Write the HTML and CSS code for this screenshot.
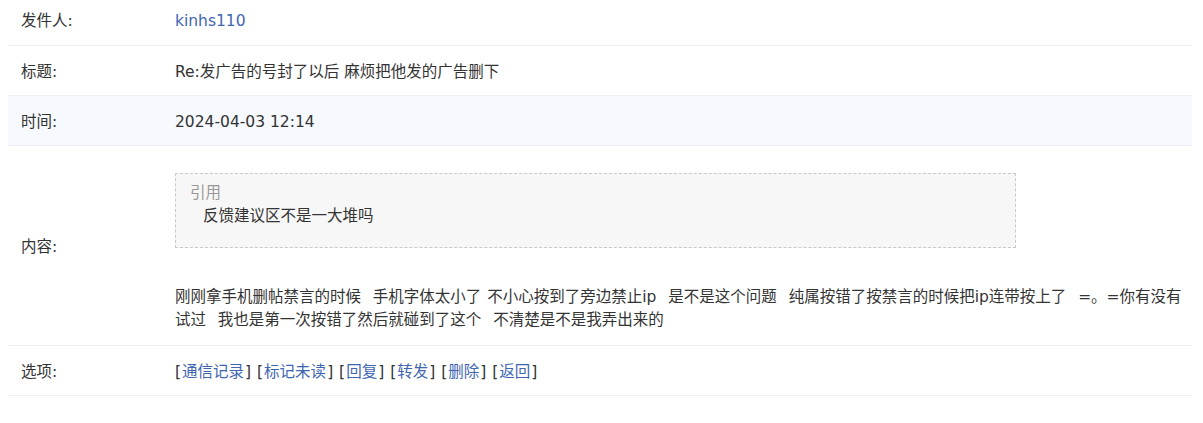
FILE: index.html
```html
<!DOCTYPE html>
<html lang="zh-CN">
<head>
    <meta charset="utf-8"/>
    <title>短消息</title>
    <link rel="stylesheet" href="styles.css">
</head>
<body>
<table class="msg">
    <tr class="first">
        <td class="label">发件人:</td>
        <td class="val"><a href="#">kinhs110</a></td>
    </tr>
    <tr>
        <td class="label">标题:</td>
        <td class="val">Re:发广告的号封了以后 麻烦把他发的广告删下</td>
    </tr>
    <tr class="alt">
        <td class="label">时间:</td>
        <td class="val">2024-04-03 12:14</td>
    </tr>
    <tr>
        <td class="label mid">内容:</td>
        <td class="val content">
            <div class="quote">
                <div class="qtitle">引用</div>
                <div class="qtext">反馈建议区不是一大堆吗</div>
            </div>
            <p class="body">刚刚拿手机删帖禁言的时候&nbsp; 手机字体太小了 不小心按到了旁边禁止ip&nbsp; 是不是这个问题&nbsp; 纯属按错了按禁言的时候把ip连带按上了&nbsp; =。=你有没有试过&nbsp; 我也是第一次按错了然后就碰到了这个&nbsp; 不清楚是不是我弄出来的</p>
        </td>
    </tr>
    <tr>
        <td class="label">选项:</td>
        <td class="val ops">[<a href="#">通信记录</a>] [<a href="#">标记未读</a>] [<a href="#">回复</a>] [<a href="#">转发</a>] [<a href="#">删除</a>] [<a href="#">返回</a>]</td>
    </tr>
</table>
</body>
</html>
```

FILE: styles.css
```css
* {
    padding: 0;
    margin: 0;
}

body {
    margin: 0 11px 0 8px;
    font-family: "DejaVu Sans", "Noto Sans CJK SC", sans-serif;
    font-size: 15.5px;
    color: #333;
    background: #fff;
}

a {
    color: #4066b2;
    text-decoration: none;
}

.msg {
    width: 100%;
    border-collapse: collapse;
}

.msg td {
    line-height: 20px;
    padding: 16px 8px 13px 0;
    border-bottom: 1px solid #ebeef2;
    vertical-align: top;
}

.msg .first td {
    padding-top: 11px;
    padding-bottom: 14px;
}

.msg .alt td {
    background-color: #f6f9fd;
}

.msg td.label {
    width: 154px;
    padding-left: 13px;
    padding-right: 0;
}

.msg td.mid {
    vertical-align: middle;
}

.msg td.content {
    padding-top: 27px;
    padding-bottom: 13px;
}

.quote {
    width: 811px;
    padding: 8px 14px 19px;
    line-height: 23px;
    background-color: #f7f7f7;
    border: 1px dashed #c9c9c9;
}

.qtitle {
    color: #999;
}

.qtext {
    padding-left: 13px;
}

.body {
    margin-top: 38px;
    line-height: 23px;
    word-spacing: 1px;
}

.ops {
    word-spacing: 1px;
}

.ops a {
    padding: 0 1px;
}
```
